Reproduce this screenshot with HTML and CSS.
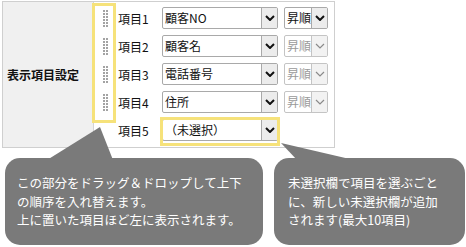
FILE: index.html
```html
<!DOCTYPE html>
<html lang="ja">
<head>
<meta charset="utf-8">
<link rel="stylesheet" href="styles.css">
</head>
<body>
<div class="figure">
  <div class="table">
    <div class="head">表示項目設定</div>
    <div class="rows">
      <div class="row">
        <span class="grip"></span><span class="label">項目1</span>
        <div class="sel main"><span class="val">顧客NO</span><span class="btn"><svg viewBox="0 0 10 6" width="10" height="6"><polyline points="1,1 5,5 9,1"/></svg></span></div>
        <div class="sel sort"><span class="val">昇順</span><span class="btn"><svg viewBox="0 0 10 6" width="10" height="6"><polyline points="1,1 5,5 9,1"/></svg></span></div>
      </div>
      <div class="row">
        <span class="grip"></span><span class="label">項目2</span>
        <div class="sel main"><span class="val">顧客名</span><span class="btn"><svg viewBox="0 0 10 6" width="10" height="6"><polyline points="1,1 5,5 9,1"/></svg></span></div>
        <div class="sel sort disabled"><span class="val">昇順</span><span class="btn"><svg viewBox="0 0 10 6" width="10" height="6"><polyline points="1,1 5,5 9,1"/></svg></span></div>
      </div>
      <div class="row">
        <span class="grip"></span><span class="label">項目3</span>
        <div class="sel main"><span class="val">電話番号</span><span class="btn"><svg viewBox="0 0 10 6" width="10" height="6"><polyline points="1,1 5,5 9,1"/></svg></span></div>
        <div class="sel sort disabled"><span class="val">昇順</span><span class="btn"><svg viewBox="0 0 10 6" width="10" height="6"><polyline points="1,1 5,5 9,1"/></svg></span></div>
      </div>
      <div class="row">
        <span class="grip"></span><span class="label">項目4</span>
        <div class="sel main"><span class="val">住所</span><span class="btn"><svg viewBox="0 0 10 6" width="10" height="6"><polyline points="1,1 5,5 9,1"/></svg></span></div>
        <div class="sel sort disabled"><span class="val">昇順</span><span class="btn"><svg viewBox="0 0 10 6" width="10" height="6"><polyline points="1,1 5,5 9,1"/></svg></span></div>
      </div>
      <div class="row">
        <span class="grip empty"></span><span class="label">項目5</span>
        <div class="sel main"><span class="val">（未選択）</span><span class="btn"><svg viewBox="0 0 10 6" width="10" height="6"><polyline points="1,1 5,5 9,1"/></svg></span></div>
      </div>
    </div>
  </div>

  <div class="hl hl-grip"></div>
  <div class="hl hl-new"></div>

  <svg class="tails" width="466" height="247" viewBox="0 0 466 247">
    <polygon points="100,127 47,160 113,160"/>
    <polygon points="281,143 297,160 354,160"/>
  </svg>

  <div class="bubble b-left">この部分をドラッグ＆ドロップして上下<br>の順序を入れ替えます。<br>上に置いた項目ほど左に表示されます。</div>
  <div class="bubble b-right">未選択欄で項目を選ぶごと<br>に、新しい未選択欄が追加<br>されます(最大10項目)</div>
</div>
</body>
</html>
```

FILE: styles.css
```css
* { box-sizing: border-box; }
html, body { margin: 0; padding: 0; background: #fff; }
body {
  font-family: "Noto Sans CJK JP", "Noto Sans", sans-serif;
  font-size: 12px;
  color: #111;
}
.figure {
  position: relative;
  width: 466px;
  height: 247px;
  overflow: hidden;
}
.table {
  display: flex;
  margin: 1px 0 0 2px;
  width: 333px;
  height: 147px;
  border: 1px solid #cfcfcf;
}
.head {
  width: 91px;
  background: #f0f0f0;
  border-right: 1px solid #d4d4d4;
  display: flex;
  align-items: center;
  padding-left: 4px;
  font-weight: bold;
  font-size: 12px;
  line-height: 1;
}
.rows {
  flex: 1;
  padding-top: 2px;
  display: flex;
  flex-direction: column;
}
.row {
  height: 28px;
  display: flex;
  align-items: center;
}
.grip {
  width: 5px;
  height: 17px;
  margin-left: 9px;
  margin-right: 10px;
  background-color: #a3a3a3;
  background-image:
    linear-gradient(to bottom, transparent 2px, #fff 2px),
    linear-gradient(to right, transparent 2px, #fff 2px);
  background-size: 3px 3px, 3px 3px;
}
.grip.empty { background: none; }
.label {
  width: 44px;
  font-size: 12px;
  line-height: 1;
  padding-top: 1px;
}
.sel {
  display: flex;
  height: 22px;
  border: 1px solid #a9a9a9;
  border-radius: 2px;
  background: #fff;
  overflow: hidden;
}
.sel.main { width: 116px; }
.sel.sort { width: 44px; margin-left: 6px; }
.val {
  flex: 1;
  padding-left: 2px;
  line-height: 20px;
  font-size: 12px;
  white-space: nowrap;
  overflow: hidden;
}
.btn {
  width: 16px;
  background: #ececec;
  border-left: 1px solid #a9a9a9;
  display: flex;
  align-items: center;
  justify-content: center;
}
.btn svg polyline {
  fill: none;
  stroke: #111;
  stroke-width: 2;
}
.sel.disabled { border-color: #c4c4c4; }
.sel.disabled .val { color: #9a9a9a; }
.sel.disabled .btn { border-left-color: #c4c4c4; background: #f2f2f2; }
.sel.disabled .btn svg polyline { stroke: #8a8a8a; stroke-width: 1.2; }

.hl {
  position: absolute;
  border: 3px solid #f6e27a;
}
.hl-grip { left: 92px; top: 3px; width: 24px; height: 120px; }
.hl-new { left: 160px; top: 117px; width: 120px; height: 29px; }

.tails { position: absolute; left: 0; top: 0; }
.tails polygon { fill: #7a7a7a; }

.bubble {
  position: absolute;
  background: #7a7a7a;
  color: #fff;
  border-radius: 15px;
  font-size: 12.5px;
  line-height: 18.7px;
  white-space: nowrap;
}
.b-left { left: 5px; top: 158px; width: 258px; height: 87px; padding: 16px 0 0 12px; }
.b-right { left: 274px; top: 158px; width: 191px; height: 87px; padding: 16px 0 0 14px; }
```
